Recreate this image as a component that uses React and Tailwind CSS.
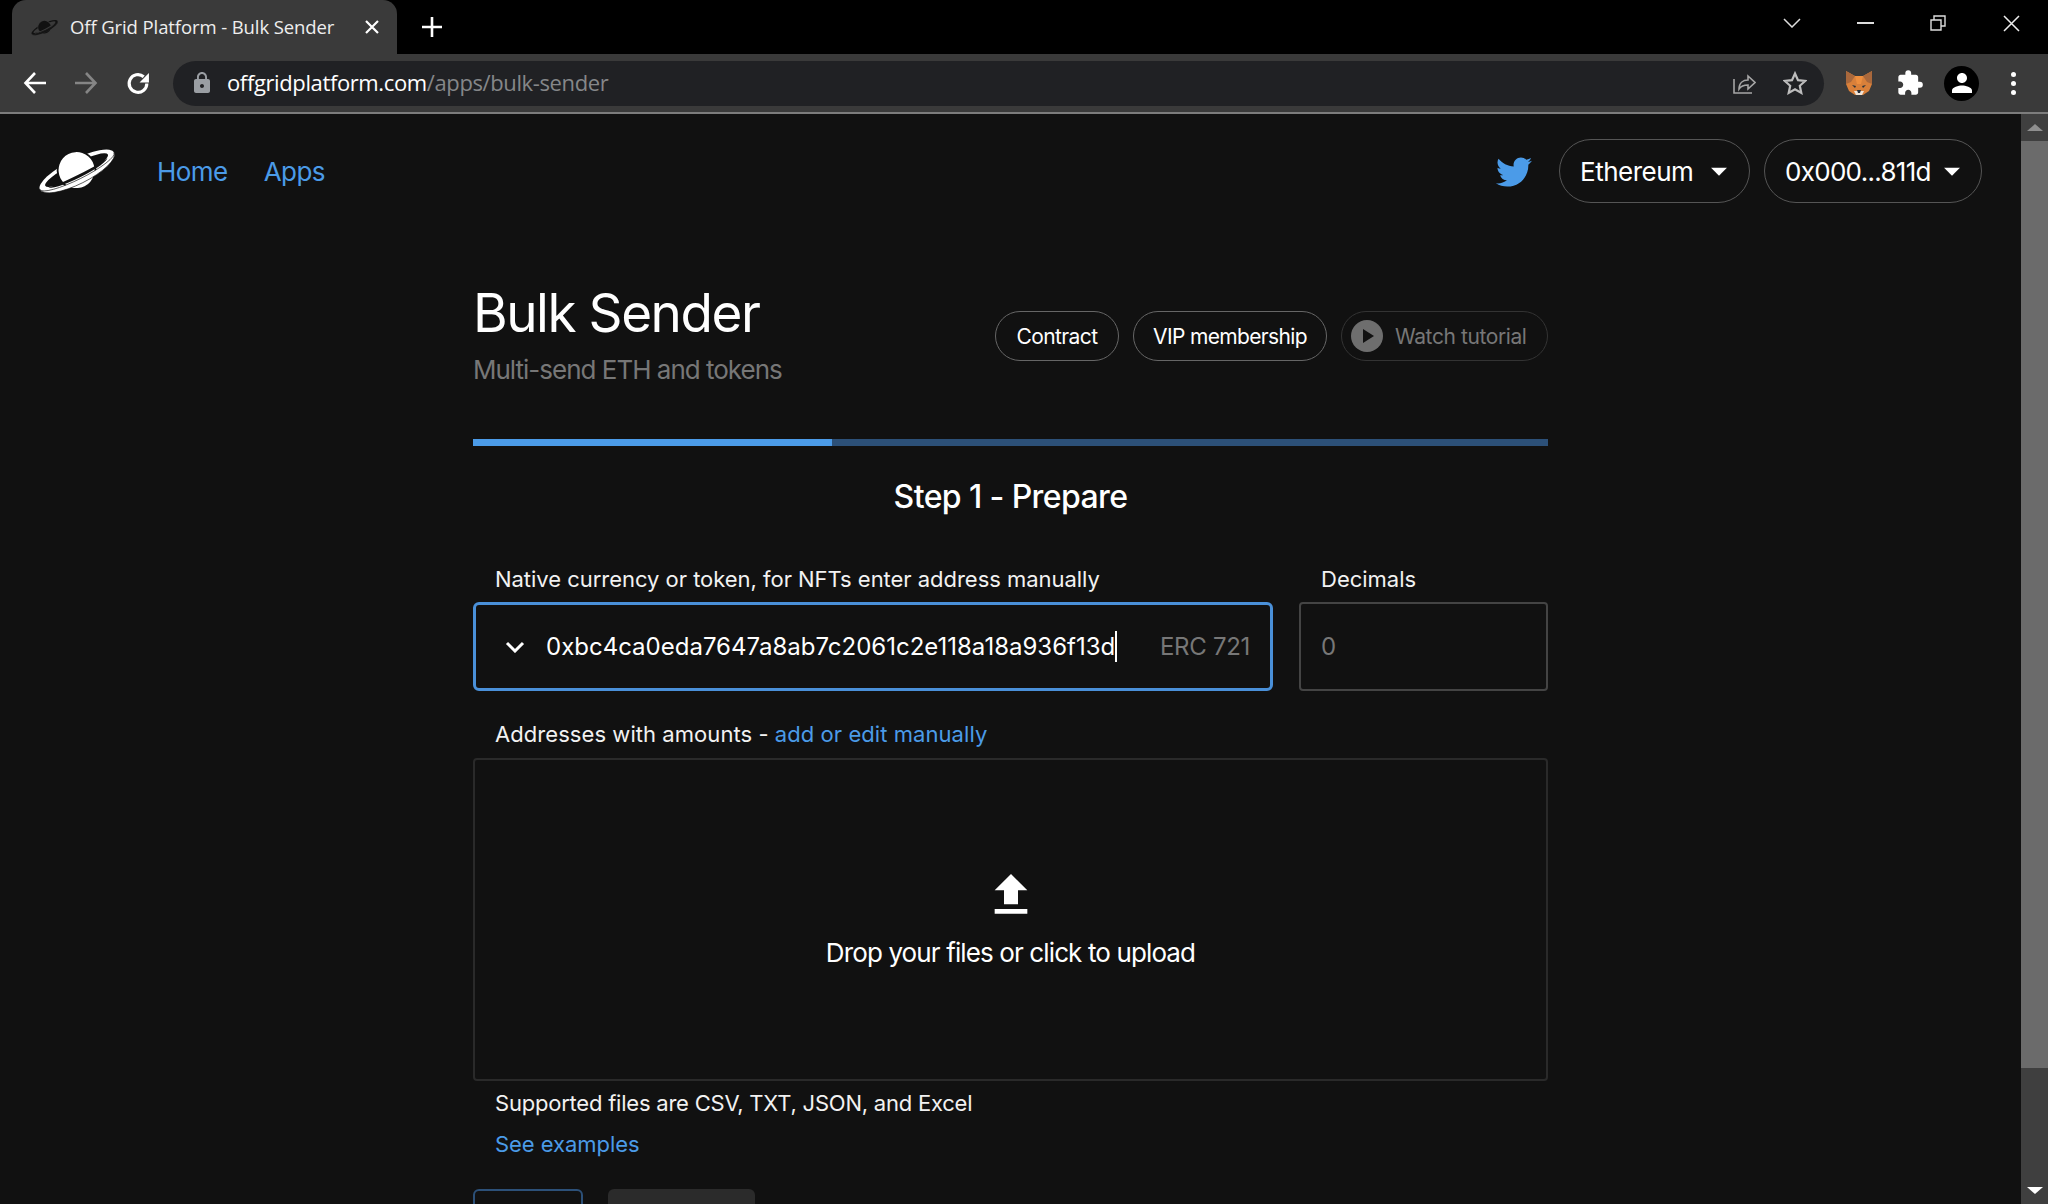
import React from "react";
import { MdExtension, MdPerson, MdFileUpload, MdPlayArrow, MdArrowDropDown, MdLock } from "react-icons/md";
import { FaTwitter } from "react-icons/fa";

function Logo({ className, color = "#fff", bg = "#111" }) {
  return (
    <svg viewBox="0 0 77 44" className={className}>
      <g transform="rotate(-26.5 39 22)">
        <ellipse cx="39" cy="22" rx="41.500" ry="12" fill={color} />
        <ellipse cx="39" cy="21" rx="35" ry="7" fill={bg} />
        <circle cx="39" cy="21" r="19.800" fill={bg} />
        <circle cx="39" cy="21" r="18" fill={color} />
        <path d="M6 23.500 A33 5.500 0 0 0 72 23.500 A33 2.500 0 0 1 6 23.500 Z" fill={bg} />
        <path d="M-2.500 22 A41.500 13 0 0 0 80.500 22 A35 7 0 0 1 -2.500 22 Z" fill={color} stroke={bg} strokeWidth="0.600" />
      </g>
    </svg>
  );
}

function Fox({ className }) {
  return (
    <svg viewBox="0 0 28 26" className={className}>
      <polygon points="1,1 10,6 18,6 27,1 27,14 24,21 18,25 10,25 4,21 1,14" fill="#d9803a" />
      <polygon points="1,1 10,6 6,12 1,14" fill="#a9683c" />
      <polygon points="27,1 18,6 22,12 27,14" fill="#a9683c" />
      <polygon points="10,6 18,6 16,14 12,14" fill="#ee8f3f" />
      <polygon points="7,15 11,16 10,18" fill="#27303a" />
      <polygon points="21,15 17,16 18,18" fill="#27303a" />
      <polygon points="9,21 19,21 17,25 11,25" fill="#f0e4d8" />
      <polygon points="12,20 16,20 15,23 13,23" fill="#27303a" />
    </svg>
  );
}

function Pill({ children, className = "" }) {
  return (
    <div className={"flex items-center rounded-full border border-[#555] h-[64px] " + className}>{children}</div>
  );
}

function SmallPill({ children, className = "" }) {
  return (
    <div className={"flex items-center justify-center rounded-full border h-[50px] text-[21px] leading-none " + className}>{children}</div>
  );
}

function Label({ children, className = "" }) {
  return (
    <div className={"text-[22px] leading-[30px] text-[#f2f2f2] " + className}>{children}</div>
  );
}

export default function App() {
  return (
    <div className="flex flex-col h-[1204px] w-[2048px] overflow-hidden bg-[#111] font-['Inter',sans-serif]">
      {/* tab strip */}
      <div className="flex h-[54px] shrink-0 bg-black pl-[12px]">
        <div className="flex items-center w-[385px] h-[54px] rounded-t-[14px] bg-[#3a3a3a] pl-[19px] pr-[18px] font-['Open_Sans',sans-serif]">
          <Logo className="w-[27px] h-[17px] shrink-0" color="#111" bg="#3a3a3a" />
          <span className="ml-[12px] text-[18.500px] leading-none text-[#eee] tracking-[-0.1px] whitespace-nowrap">Off Grid Platform - Bulk Sender</span>
          <svg viewBox="0 0 14 14" className="ml-auto w-[14px] h-[14px]" stroke="#fff" strokeWidth="2.2"><path d="M1 1l12 12M13 1L1 13" /></svg>
        </div>
        <svg viewBox="0 0 20 20" className="ml-[25px] mt-[17px] w-[20px] h-[20px]" stroke="#fff" strokeWidth="2.6"><path d="M10 0v20M0 10h20" /></svg>
        <div className="ml-auto flex items-center h-[46px]">
          <svg viewBox="0 0 18 10" className="w-[18px] h-[10px]" fill="none" stroke="#ddd" strokeWidth="1.5"><path d="M1 1l8 8 8-8" /></svg>
          <div className="ml-[56px] w-[17px] h-[2px] bg-[#ddd]" />
          <svg viewBox="0 0 16 16" className="ml-[56px] w-[16px] h-[16px]" fill="none" stroke="#ddd" strokeWidth="1.4"><path d="M1 5h10v10H1zM4 5V1h11v10h-4" /></svg>
          <svg viewBox="0 0 17 17" className="ml-[57px] mr-[28px] w-[17px] h-[17px]" fill="none" stroke="#eee" strokeWidth="1.5"><path d="M1 1l15 15M16 1L1 16" /></svg>
        </div>
      </div>
      {/* toolbar */}
      <div className="flex items-center h-[58px] shrink-0 bg-[#3a3a3a]">
        <svg viewBox="0 0 24 24" className="ml-[23px] w-[24px] h-[24px]" fill="none" stroke="#fff" strokeWidth="2.6"><path d="M23 12H3M12 2L2.500 12 12 22" /></svg>
        <svg viewBox="0 0 24 24" className="ml-[27px] w-[24px] h-[24px]" fill="none" stroke="#858585" strokeWidth="2.6"><path d="M1 12h20M12 2l9.500 10L12 22" /></svg>
        <svg viewBox="0 0 24 24" className="ml-[28px] w-[25px] h-[25px]" fill="none"><path d="M20 12a8.500 8.500 0 1 1-3-6.500" stroke="#fff" strokeWidth="3" /><path d="M22 2v9h-9z" fill="#fff" /></svg>
        <div className="ml-[22px] flex items-center h-[45px] w-[1651px] rounded-full bg-[#202124] font-['Open_Sans',sans-serif]">
          <MdLock className="ml-[17px] w-[24px] h-[24px] text-[#9a9ea3]" />
          <span className="ml-[13px] -mt-[2px] text-[22px] leading-none whitespace-nowrap tracking-[-0.38px] text-white">offgridplatform.com<span className="text-[#858789]">/apps/bulk-sender</span></span>
          <svg viewBox="0 0 24 24" className="ml-auto w-[24px] h-[24px]" fill="none" stroke="#a6a6a6" strokeWidth="1.6"><path d="M2 8v14h18M7 18c0-6 4-9 9-9V5l7 6.500-7 6.500v-4c-4 0-7 1-9 4z" /></svg>
          <svg viewBox="0 0 24 24" className="ml-[27px] mr-[17px] w-[24px] h-[24px]" fill="none" stroke="#bdbdbd" strokeWidth="2.2"><path d="M12 2.500l3 6.700 7.200.8-5.400 4.800 1.500 7.100-6.300-3.600-6.300 3.600 1.500-7.100L1.800 10l7.200-.8z" /></svg>
        </div>
        <Fox className="ml-[21px] w-[28px] h-[26px]" />
        <MdExtension className="ml-[23px] w-[28px] h-[28px] text-white" />
        <div className="ml-[20px] flex items-center justify-center w-[35px] h-[35px] rounded-full bg-black">
          <MdPerson className="w-[30px] h-[30px] text-white" />
        </div>
        <div className="ml-[32px] flex flex-col gap-[4px]">
          <div className="w-[5px] h-[5px] rounded-full bg-white" />
          <div className="w-[5px] h-[5px] rounded-full bg-white" />
          <div className="w-[5px] h-[5px] rounded-full bg-white" />
        </div>
      </div>
      <div className="h-[2px] shrink-0 bg-[#7d7d7d]" />
      {/* page */}
      <div className="flex flex-1 min-h-0">
        <div className="flex-1 min-w-0 overflow-hidden">
          <nav className="flex items-center h-[64px] mt-[25px] pl-[38px] pr-[39px]">
            <Logo className="w-[77px] h-[44px]" />
            <a className="ml-[42px] pt-[2px] text-[26px] leading-none tracking-[-0.55px] text-[#4b9be8]">Home</a>
            <a className="ml-[36px] pt-[2px] text-[26px] leading-none tracking-[-0.55px] text-[#4b9be8]">Apps</a>
            <FaTwitter className="ml-auto mt-[2px] w-[36px] h-[36px] text-[#4b9be8]" />
            <Pill className="ml-[27px] w-[191px] pl-[20px] text-white">
              <span className="pt-[2px] text-[26px] leading-none tracking-[-0.5px]">Ethereum</span>
              <MdArrowDropDown className="ml-[7px] w-[38px] h-[38px]" />
            </Pill>
            <Pill className="ml-[14px] w-[218px] pl-[20px] text-white">
              <span className="pt-[2px] text-[26px] leading-none tracking-[-0.7px]">0x000...811d</span>
              <MdArrowDropDown className="ml-[2px] w-[38px] h-[38px]" />
            </Pill>
          </nav>
          <main className="mx-auto w-[1075px] mt-[76px]">
            <div className="flex items-start justify-between h-[160px]">
              <div>
                <h1 className="text-[53px] leading-[68px] tracking-[-1.45px] text-white">Bulk Sender</h1>
                <p className="mt-[7px] text-[26px] leading-[32px] tracking-[-1px] text-[#777]">Multi-send ETH and tokens</p>
              </div>
              <div className="flex gap-[14px] mt-[32px]">
                <SmallPill className="w-[124px] border-[#666] text-white tracking-[-0.6px]">Contract</SmallPill>
                <SmallPill className="w-[194px] border-[#666] text-white tracking-[-0.65px]">VIP membership</SmallPill>
                <SmallPill className="w-[207px] border-[#333] text-[#777] justify-start pl-[9px] tracking-[-0.4px]">
                  <span className="flex items-center justify-center w-[32px] h-[32px] rounded-full bg-[#6e6e6e] mr-[12px]">
                    <MdPlayArrow className="w-[24px] h-[24px] text-[#111]" />
                  </span>
                  Watch tutorial
                </SmallPill>
              </div>
            </div>
            <div className="flex h-[7px] bg-[#2c5078]">
              <div className="w-[359px] bg-[#4b9be8]" />
            </div>
            <h2 className="mt-[31px] text-center text-[32px] leading-[40px] font-medium tracking-[-0.6px] text-white">Step 1 - Prepare</h2>
            <div className="mt-[47px] flex gap-[26px]">
              <div className="w-[800px]">
                <Label className="pl-[22px] tracking-[-0.03px]">Native currency or token, for NFTs enter address manually</Label>
                <div className="mt-[8px] flex items-center h-[89px] rounded-[6px] border-[3px] border-[#4a90d9] pl-[29px] pr-[20px]">
                  <svg viewBox="0 0 20 12" className="w-[20px] h-[12px] shrink-0" fill="none" stroke="#fff" strokeWidth="3"><path d="M2 2l8 8 8-8" /></svg>
                  <span className="ml-[21px] text-[24px] leading-[31px] tracking-[0px] text-white whitespace-nowrap border-r-2 border-white">0xbc4ca0eda7647a8ab7c2061c2e118a18a936f13d</span>
                  <span className="ml-auto text-[24px] leading-none tracking-[-0.3px] text-[#777]">ERC 721</span>
                </div>
              </div>
              <div className="w-[249px]">
                <Label className="pl-[22px]">Decimals</Label>
                <div className="mt-[8px] flex items-center h-[89px] rounded-[4px] border-2 border-[#444] pl-[20px]">
                  <span className="text-[24px] leading-none text-[#777]">0</span>
                </div>
              </div>
            </div>
            <Label className="mt-[28px] pl-[22px] tracking-[0.06px]">Addresses with amounts - <span className="text-[#4b9be8]">add or edit manually</span></Label>
            <div className="mt-[9px] flex flex-col items-center h-[323px] rounded-[4px] border-2 border-[#2a2a2a] pt-[107px]">
              <MdFileUpload className="w-[56px] h-[56px] text-white" />
              <div className="mt-[14px] text-[26px] leading-[32px] tracking-[-0.88px] text-white">Drop your files or click to upload</div>
            </div>
            <Label className="mt-[7px] pl-[22px] tracking-[-0.22px]">Supported files are CSV, TXT, JSON, and Excel</Label>
            <Label className="mt-[11px] pl-[22px] tracking-[-0.05px] !text-[#4b9be8]">See examples</Label>
            <div className="mt-[30px] flex gap-[25px]">
              <div className="w-[110px] h-[50px] rounded-[6px] border-2 border-[#2c5078]" />
              <div className="w-[147px] h-[50px] rounded-[6px] bg-[#2b2b2b]" />
            </div>
          </main>
        </div>
        {/* scrollbar */}
        <div className="flex flex-col w-[27px] shrink-0 bg-[#3f3f3f]">
          <div className="flex items-center justify-center h-[27px]">
            <div className="w-0 h-0 border-x-[8px] border-x-transparent border-b-[7px] border-b-[#8f8f8f]" />
          </div>
          <div className="h-[927px] bg-[#6b6b6b]" />
          <div className="mt-auto flex items-center justify-center h-[27px]">
            <div className="w-0 h-0 border-x-[8px] border-x-transparent border-t-[7px] border-t-white" />
          </div>
        </div>
      </div>
    </div>
  );
}
